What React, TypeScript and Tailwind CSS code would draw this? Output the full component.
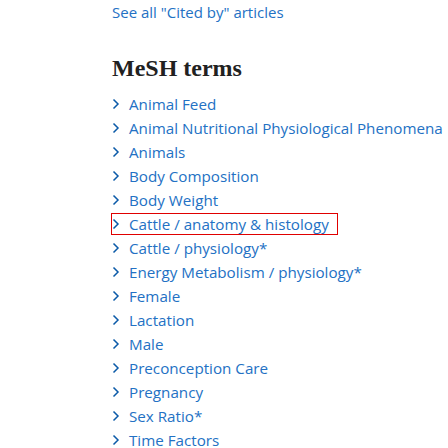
const terms = [
  'Animal Feed',
  'Animal Nutritional Physiological Phenomena',
  'Animals',
  'Body Composition',
  'Body Weight',
  'Cattle / anatomy & histology',
  'Cattle / physiology*',
  'Energy Metabolism / physiology*',
  'Female',
  'Lactation',
  'Male',
  'Preconception Care',
  'Pregnancy',
  'Sex Ratio*',
  'Time Factors',
]

function Chevron() {
  return (
    <svg width="8" height="12" viewBox="0 0 8 12" className="shrink-0">
      <path d="M1.5 1.5 L6 6 L1.5 10.5" fill="none" stroke="#0b5aa8" strokeWidth="1.5" />
    </svg>
  )
}

export default function App() {
  return (
    <div className="h-[448px] w-[448px] overflow-hidden bg-white pl-[112px] font-['Open_Sans',sans-serif]">
      <div className="pt-[1px] text-[15px] leading-[22px] text-[#2371c4]">See all "Cited by" articles</div>

      <h2 className="mt-[30px] font-['Liberation_Serif',serif] text-[24px] font-bold leading-[30px] text-[#212121]">
        MeSH terms
      </h2>

      <ul className="mt-[10px]">
        {terms.map((t) => (
          <li key={t} className="h-[24px]">
            <div
              className={`flex h-[22px] items-center gap-[9px] text-[15.2px] text-[#2371c4] ${
                t === 'Cattle / anatomy & histology'
                  ? '-ml-[1px] w-[227px] pl-[1px] outline outline-1 -outline-offset-1 outline-[#e00000]'
                  : ''
              }`}
            >
              <Chevron />
              <span className="whitespace-nowrap">{t}</span>
            </div>
          </li>
        ))}
      </ul>
    </div>
  )
}
